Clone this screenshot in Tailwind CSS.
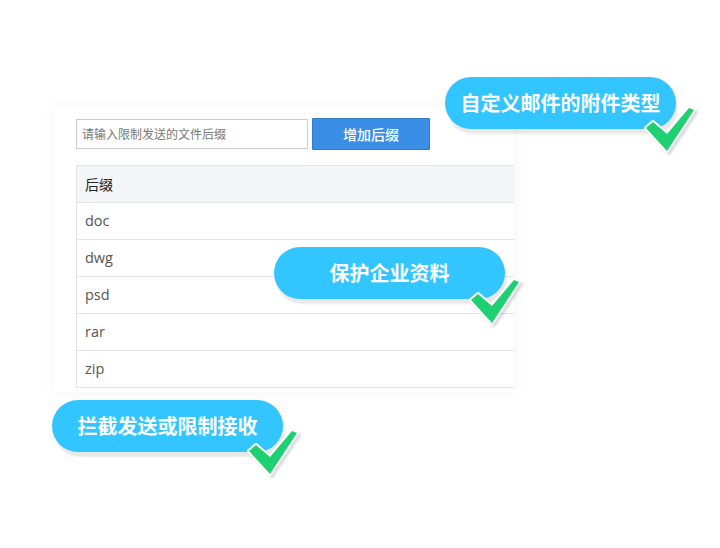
<!DOCTYPE html>
<html lang="zh-CN">
<head>
    <meta charset="UTF-8">
    <title>附件类型</title>
    <script src="https://cdn.jsdelivr.net/npm/@tailwindcss/browser@4"></script>
</head>
<body class="bg-white font-['Open_Sans','Noto_Sans_CJK_SC',sans-serif]">
    <div class="relative w-[720px] h-[548px] overflow-hidden pt-[107px] pl-[54px]">
        <!-- card -->
        <div class="w-[460px] h-[285px] bg-white shadow-[0_0_12px_rgba(0,0,0,0.05)] pl-[22px] pt-[11px]">
            <div class="flex items-center gap-1">
                <input type="text" placeholder="请输入限制发送的文件后缀" class="w-[232px] h-[30px] border border-[#ccc] px-[5px] text-[12px] placeholder:text-[#777] outline-none">
                <button class="w-[118px] h-[32px] bg-[#3a8ee6] border border-[#2f7cc9] rounded-[1px] text-white text-[14px] font-medium">增加后缀</button>
            </div>
            <div class="mt-[15px] border border-r-0 border-[#e4e4e4] text-[14.5px] text-[#555]">
                <div class="h-[36px] flex items-center px-2 bg-[#f4f5f9] text-[#222] text-[14px]">后缀</div>
                <div class="h-[37px] flex items-center px-2 pb-px border-t border-[#e4e4e4]">doc</div>
                <div class="h-[37px] flex items-center px-2 pb-px border-t border-[#e4e4e4]">dwg</div>
                <div class="h-[37px] flex items-center px-2 pb-px border-t border-[#e4e4e4]">psd</div>
                <div class="h-[37px] flex items-center px-2 pb-px border-t border-[#e4e4e4]">rar</div>
                <div class="h-[37px] flex items-center px-2 pb-px border-t border-[#e4e4e4]">zip</div>
            </div>
        </div>

        <!-- badge 1 -->
        <div class="absolute left-[445px] top-[77px] w-[231px] h-[52px] pt-[2px] rounded-full bg-[#33c5ff] shadow-[2px_5px_2px_rgba(0,0,0,0.09)] flex items-center justify-center text-white font-bold text-[20px] leading-none">自定义邮件的附件类型</div>
        <svg class="absolute left-[642px] top-[105px] drop-shadow-[2px_2px_1px_rgba(0,0,0,0.15)]" width="56" height="50" viewBox="0 0 56 50">
            <path d="M4 23 L11 17 L25 29 L47 3 L52 5 L25 46 Z" fill="#1fd073" stroke="#fff" stroke-width="4" stroke-linejoin="round" class="[paint-order:stroke]"/>
        </svg>

        <!-- badge 2 -->
        <div class="absolute left-[274px] top-[247px] w-[231px] h-[52px] pt-[2px] rounded-full bg-[#33c5ff] shadow-[2px_5px_2px_rgba(0,0,0,0.09)] flex items-center justify-center text-white font-bold text-[20px] leading-none">保护企业资料</div>
        <svg class="absolute left-[467px] top-[277px] drop-shadow-[2px_2px_1px_rgba(0,0,0,0.15)]" width="56" height="50" viewBox="0 0 56 50">
            <path d="M4 23 L11 17 L25 29 L47 3 L52 5 L25 46 Z" fill="#1fd073" stroke="#fff" stroke-width="4" stroke-linejoin="round" class="[paint-order:stroke]"/>
        </svg>

        <!-- badge 3 -->
        <div class="absolute left-[52px] top-[400px] w-[231px] h-[52px] pt-[2px] rounded-full bg-[#33c5ff] shadow-[2px_5px_2px_rgba(0,0,0,0.09)] flex items-center justify-center text-white font-bold text-[20px] leading-none">拦截发送或限制接收</div>
        <svg class="absolute left-[245px] top-[428px] drop-shadow-[2px_2px_1px_rgba(0,0,0,0.15)]" width="56" height="50" viewBox="0 0 56 50">
            <path d="M4 23 L11 17 L25 29 L47 3 L52 5 L25 46 Z" fill="#1fd073" stroke="#fff" stroke-width="4" stroke-linejoin="round" class="[paint-order:stroke]"/>
        </svg>
    </div>
</body>
</html>
